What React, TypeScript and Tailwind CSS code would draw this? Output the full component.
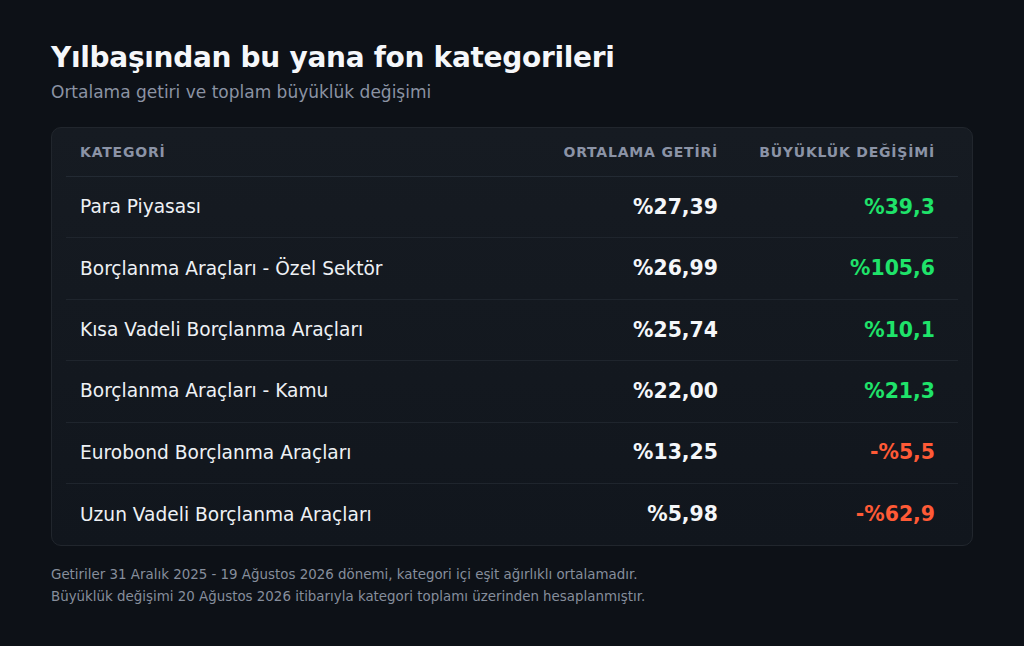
import React from "react";

const rows = [
  { name: "Para Piyasası", ret: "%27,39", chg: "%39,3", pos: true },
  { name: "Borçlanma Araçları - Özel Sektör", ret: "%26,99", chg: "%105,6", pos: true },
  { name: "Kısa Vadeli Borçlanma Araçları", ret: "%25,74", chg: "%10,1", pos: true },
  { name: "Borçlanma Araçları - Kamu", ret: "%22,00", chg: "%21,3", pos: true },
  { name: "Eurobond Borçlanma Araçları", ret: "%13,25", chg: "-%5,5", pos: false },
  { name: "Uzun Vadeli Borçlanma Araçları", ret: "%5,98", chg: "-%62,9", pos: false },
];

export default function App() {
  return (
    <div
      className="w-[1024px] h-[646px] bg-[#0d1117] px-[51px] pt-[40px] text-white"
      style={{ fontFamily: '"DejaVu Sans", sans-serif' }}
    >
      <h1 className="text-[28px] font-bold leading-[36px] tracking-[-0.3px] text-[#f5f7fa]">
        Yılbaşından bu yana fon kategorileri
      </h1>
      <p className="mt-[4px] text-[17px] leading-[24px] text-[#8b93a3]">
        Ortalama getiri ve toplam büyüklük değişimi
      </p>
      <div className="mt-[23px] rounded-[10px] border border-[#21262d] bg-gradient-to-b from-[#161b22] to-[#11161d] px-[14px]">
        <div className="flex h-[49px] items-center border-b border-[#232a33] pl-[14px] pr-[23px] text-[14px] font-bold tracking-[0.8px] text-[#8b93a6]">
          <div className="flex-1">KATEGORİ</div>
          <div className="w-[220px] text-right">ORTALAMA GETİRİ</div>
          <div className="w-[217px] text-right">BÜYÜKLÜK DEĞİŞİMİ</div>
        </div>
        {rows.map((r, i) => (
          <div
            key={i}
            className={`flex h-[61.4px] items-center pl-[14px] pr-[23px] ${
              i < rows.length - 1 ? "border-b border-[#1f252d]" : ""
            }`}
          >
            <div className="flex-1 text-[18.6px] text-[#eef1f5]">{r.name}</div>
            <div className="w-[220px] text-right text-[20.4px] font-bold text-[#f5f7fa]">{r.ret}</div>
            <div
              className={`w-[217px] text-right text-[20.4px] font-bold ${
                r.pos ? "text-[#1fe36a]" : "text-[#ff5a36]"
              }`}
            >
              {r.chg}
            </div>
          </div>
        ))}
      </div>
      <div className="mt-[18px] text-[13.4px] leading-[22px] text-[#868e9c]">
        <p>Getiriler 31 Aralık 2025 - 19 Ağustos 2026 dönemi, kategori içi eşit ağırlıklı ortalamadır.</p>
        <p>Büyüklük değişimi 20 Ağustos 2026 itibarıyla kategori toplamı üzerinden hesaplanmıştır.</p>
      </div>
    </div>
  );
}
